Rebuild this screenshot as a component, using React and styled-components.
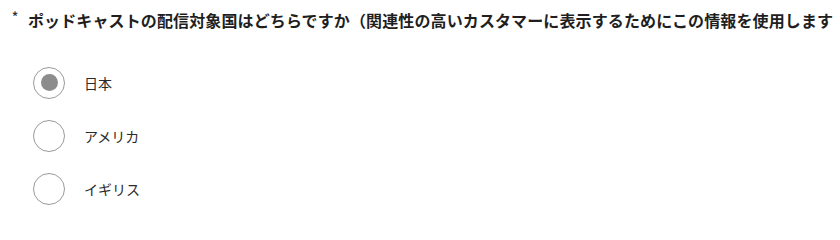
import React, { useState } from "react";
import styled, { createGlobalStyle } from "styled-components";

const GlobalStyle = createGlobalStyle`
  body {
    margin: 0;
    background-color: #ffffff;
    font-family: "Noto Sans CJK JP", "Noto Sans", sans-serif;
    color: #222222;
  }
`

const Wrapper = styled.div`
  padding: 8px 0 0 12px;
`

const Question = styled.div`
  display: flex;
  align-items: flex-start;
  white-space: nowrap;
`

const Required = styled.span`
  width: 16px;
  font-size: 12px;
  line-height: 16px;
  font-weight: bold;
  color: #333333;
`

const QuestionText = styled.span`
  font-size: 16px;
  line-height: 24px;
  font-weight: bold;
  letter-spacing: 0.12px;
  color: #1f1f1f;
`

const Options = styled.div`
  display: flex;
  flex-direction: column;
  margin-top: 24px;
  padding-left: 21px;
`

const Option = styled.label`
  display: flex;
  align-items: center;
  height: 53px;
  cursor: pointer;
`

const Circle = styled.span`
  display: flex;
  align-items: center;
  justify-content: center;
  box-sizing: border-box;
  width: 32px;
  height: 32px;
  border-radius: 50%;
  border: 1px solid #9a9a9a;
  background: #ffffff;
`

const Dot = styled.span`
  width: 17px;
  height: 17px;
  border-radius: 50%;
  background: ${props => (props.checked ? "#8c8c8c" : "transparent")};
`

const Label = styled.span`
  margin-left: 19px;
  font-size: 14px;
  line-height: 20px;
  color: #2a2a2a;
`

const countries = ["日本", "アメリカ", "イギリス"]

const App = () => {
  const [selected, setSelected] = useState("日本")

  return (
    <Wrapper>
      <GlobalStyle />
      <Question>
        <Required>*</Required>
        <QuestionText>ポッドキャストの配信対象国はどちらですか（関連性の高いカスタマーに表示するためにこの情報を使用します</QuestionText>
      </Question>
      <Options>
        {countries.map(country => (
          <Option key={country} onClick={() => setSelected(country)}>
            <Circle>
              <Dot checked={selected === country} />
            </Circle>
            <Label>{country}</Label>
          </Option>
        ))}
      </Options>
    </Wrapper>
  );
}

export default App;
